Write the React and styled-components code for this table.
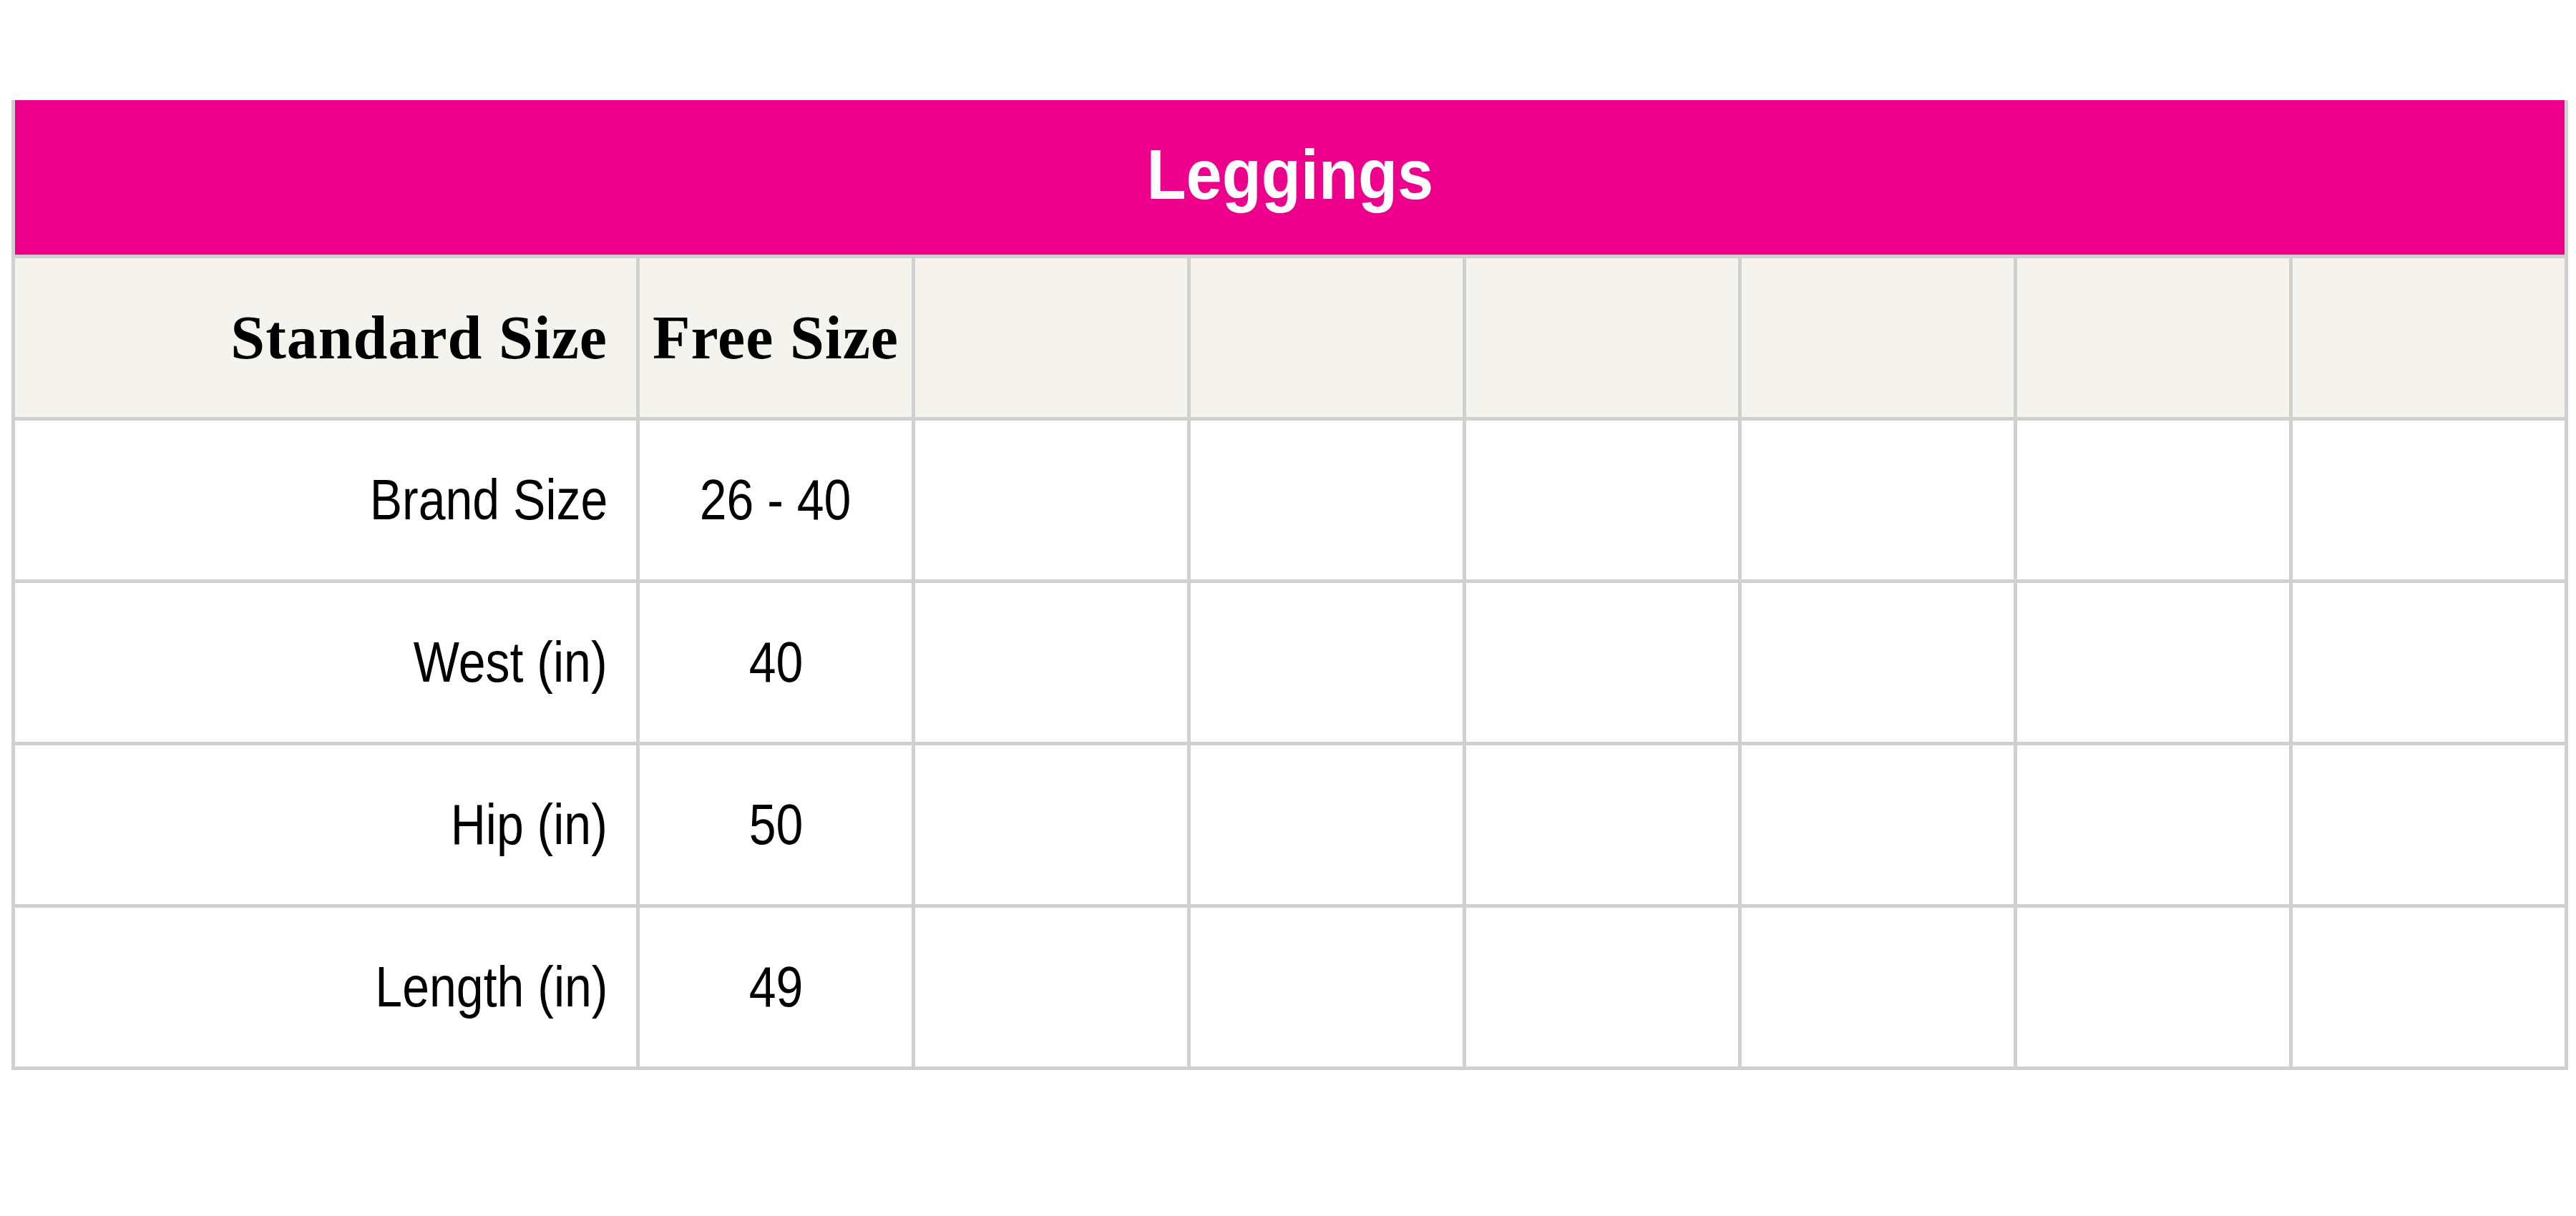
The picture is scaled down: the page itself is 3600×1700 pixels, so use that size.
import React from "react";
import styled, { createGlobalStyle } from "styled-components";

const Global = createGlobalStyle`
  html, body { margin: 0; padding: 0; background: #ffffff; }
  body { font-family: "Liberation Sans", Arial, sans-serif; }
`;

const Page = styled.div`
  padding: 140px 0 0 16px;
  width: 3600px;
  height: 1700px;
  box-sizing: border-box;
  background: #ffffff;
`;

const Grid = styled.div`
  display: grid;
  grid-template-columns: 868px repeat(7, 380px);
  grid-template-rows: 216px 222px repeat(4, 222px);
  gap: 5px;
  padding: 0 5px 5px 5px;
  background: #d0d0d0;
  width: max-content;
`;

const Title = styled.div`
  grid-column: 1 / -1;
  background: #ec008c;
  color: #ffffff;
  display: flex;
  align-items: center;
  justify-content: center;
  padding-bottom: 8px;
  font-family: "Liberation Sans", Arial, sans-serif;
  font-weight: 700;
  font-size: 98px;
`;

const Cell = styled.div`
  background: ${(p) => (p.$head ? "#f4f3ed" : "#ffffff")};
  display: flex;
  align-items: center;
  justify-content: ${(p) => (p.$align === "right" ? "flex-end" : "center")};
  padding-right: ${(p) => (p.$align === "right" ? "40px" : "0")};
  color: #000000;
  font-family: ${(p) =>
    p.$head
      ? '"Liberation Serif", "Times New Roman", serif'
      : '"Liberation Sans", Arial, sans-serif'};
  font-weight: ${(p) => (p.$head ? 700 : 400)};
  font-size: ${(p) => (p.$head ? "86px" : "80px")};
  letter-spacing: ${(p) => (p.$head ? "1px" : "0")};
  white-space: nowrap;
`;

const Narrow = styled.span`
  display: inline-block;
  transform: scaleX(${(p) => p.$scale || 0.85});
  transform-origin: ${(p) => (p.$align === "right" ? "right center" : "center center")};
`;

const rows = [
  ["Brand Size", "26 - 40"],
  ["West (in)", "40"],
  ["Hip (in)", "50"],
  ["Length (in)", "49"],
];

const empties = [0, 1, 2, 3, 4, 5];

export default function App() {
  return (
    <>
      <Global />
      <Page>
        <Grid>
          <Title>
            <Narrow $scale={0.92}>Leggings</Narrow>
          </Title>
          <Cell $head $align="right">Standard Size</Cell>
          <Cell $head>Free Size</Cell>
          {empties.map((i) => (
            <Cell key={"h" + i} $head />
          ))}
          {rows.map(([label, value]) => (
            <React.Fragment key={label}>
              <Cell $align="right">
                <Narrow $align="right">{label}</Narrow>
              </Cell>
              <Cell>
                <Narrow>{value}</Narrow>
              </Cell>
              {empties.map((i) => (
                <Cell key={label + i} />
              ))}
            </React.Fragment>
          ))}
        </Grid>
      </Page>
    </>
  );
}
